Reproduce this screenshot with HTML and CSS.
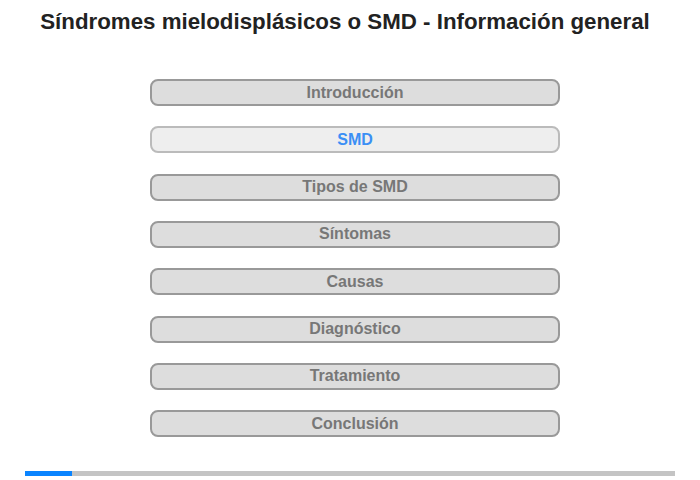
FILE: index.html
```html
<!DOCTYPE html>
<html lang="es">
<head>
    <meta charset="UTF-8">
    <meta name="viewport" content="width=device-width, initial-scale=1.0">
    <title>Síndromes mielodisplásicos o SMD - Información general</title>
    <link rel="stylesheet" href="styles.css">
</head>
<body>

<h1>Síndromes mielodisplásicos o SMD - Información general</h1>

<div class="menu">
    <button class="item">Introducción</button>
    <button class="item active">SMD</button>
    <button class="item">Tipos de SMD</button>
    <button class="item">Síntomas</button>
    <button class="item">Causas</button>
    <button class="item">Diagnóstico</button>
    <button class="item">Tratamiento</button>
    <button class="item">Conclusión</button>
</div>

<div class="progress">
    <div class="progress-fill" style="width: 47px;"></div>
</div>

</body>
</html>
```

FILE: styles.css
```css
body {
    font-family: 'Liberation Sans', Arial, sans-serif;
    background: #fff;
    margin: 0;
    padding: 0;
    height: 480px;
}
h1 {
    margin: 0;
    padding-top: 9px;
    font-size: 22.3px;
    line-height: 26px;
    color: #222;
    text-align: center;
    padding-right: 10px;
}
.menu {
    display: flex;
    flex-direction: column;
    gap: 20.33px;
    width: 410px;
    margin: 44px 0 0 150px;
}
.item {
    height: 27px;
    padding: 0;
    background-color: #dddddd;
    border: 2px solid #999;
    border-radius: 8px;
    font-family: 'Liberation Sans', Arial, sans-serif;
    font-size: 16px;
    font-weight: bold;
    color: #777;
    cursor: pointer;
}
.item.active {
    background-color: #eeeeee;
    border-color: #bbb;
    color: #3b8ff5;
}
.progress {
    margin: 34px 25px 0;
    height: 5px;
    background-color: #c4c4c4;
}
.progress-fill {
    height: 100%;
    background-color: #0a84ff;
}
```
